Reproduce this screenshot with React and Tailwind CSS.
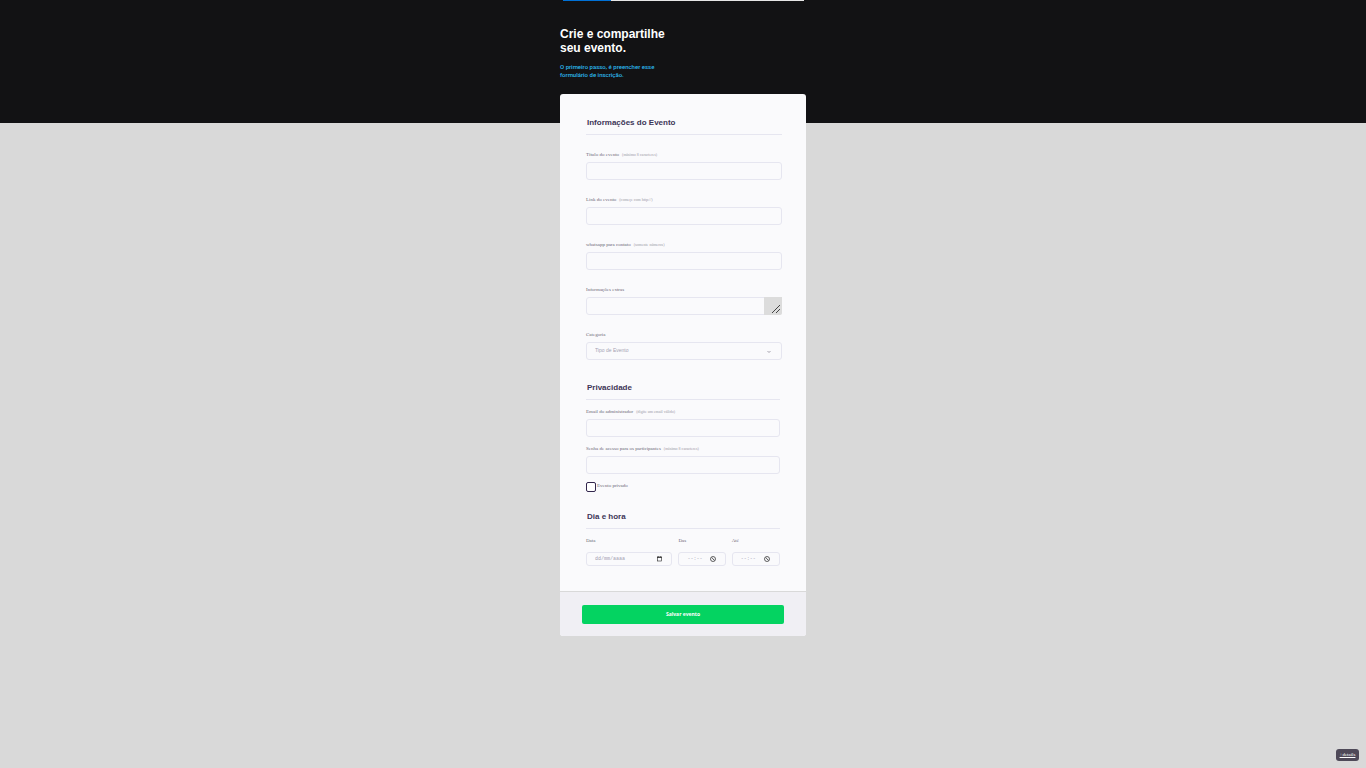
import React from 'react';

const inputClass = 'block w-full h-[18px] rounded-[3px] border border-[#e6e6f0] bg-[#fafafc] px-2 text-[5px] text-[#4e4958] outline-none';
const labelClass = "block font-['Liberation_Serif',serif] text-[5px] leading-[8px] text-[#6c6877]";

function SectionTitle({ children }) {
  return (
    <h2 className="border-b border-[#e6e6f0] pb-[5px] pl-px text-[8px] leading-[12px] font-bold text-[#3d3557]">
      {children}
    </h2>
  );
}

function FieldLabel({ id, text, hint }) {
  return (
    <label htmlFor={id} className={labelClass}>
      {text}
      {hint && <span className="ml-[3px] text-[4px] text-[#9c98a6]">{hint}</span>}
    </label>
  );
}

function Field({ id, text, hint, type = 'text' }) {
  return (
    <div className="flex flex-col gap-[3px]">
      <FieldLabel id={id} text={text} hint={hint} />
      <input id={id} type={type} className={inputClass} />
    </div>
  );
}

function PickerField({ id, text, placeholder, action, children }) {
  return (
    <div className="flex flex-col gap-[7px]">
      <FieldLabel id={id} text={text} />
      <div className="flex h-[14px] items-center rounded-[3px] border border-[#e6e6f0] pl-2 pr-[9px]">
        <input
          id={id}
          type="text"
          placeholder={placeholder}
          className="h-full w-0 min-w-0 flex-1 bg-transparent font-['Liberation_Mono',monospace] text-[5px] outline-none placeholder:text-[#a5a2b3]"
        />
        <button type="button" aria-label={action} className="flex-none">{children}</button>
      </div>
    </div>
  );
}

function CalendarIcon() {
  return (
    <svg width="5" height="6" viewBox="0 0 5 6" fill="none" stroke="#222" aria-hidden="true">
      <rect x="0.4" y="1" width="4.2" height="4" strokeWidth="0.6" />
      <path d="M0.2 1.4h4.6M1.2 0.3v1M3.8 0.3v1" strokeWidth="0.8" />
    </svg>
  );
}

function ClockIcon() {
  return (
    <svg width="6" height="6" viewBox="0 0 6 6" fill="none" stroke="#222" aria-hidden="true">
      <circle cx="3" cy="3" r="2.5" strokeWidth="0.7" />
      <path d="M2 1.6l1 1.5 1.5 1.2" strokeWidth="0.7" />
    </svg>
  );
}

export default function App() {
  return (
    <div className="min-h-screen bg-[#d9d9d9] font-['Liberation_Sans',Arial,sans-serif]">
      <header className="bg-[#121214] pb-[43px]">
        <div className="mx-auto w-full max-w-[246px]">
          <div className="ml-[3px] mr-[2px] flex h-px bg-[#e6e6e6]">
            <div className="w-1/5 bg-[#0070d6]" />
          </div>
          <div className="pt-[26px]">
            <h1 className="text-[12px] leading-[14px] font-bold text-white">
              Crie e compartilhe<br />seu evento.
            </h1>
            <p className="mt-2 pb-[1px] font-['Roboto',sans-serif] text-[6px] leading-[8px] font-medium text-[#2cb9ef]">
              O primeiro passo, é preencher esse<br />formulário de inscrição.
            </p>
          </div>
        </div>
      </header>

      <main className="mx-auto -mt-[29px] w-full max-w-[246px]">
        <form className="overflow-hidden rounded-[3px] bg-[#fafafc]" onSubmit={(e) => e.preventDefault()}>
          <div className="pt-[23px] pb-[25px] pl-[26px]">
            {/* event info */}
            <section className="mr-6">
              <SectionTitle>Informações do Evento</SectionTitle>
              <div className="mt-4 flex flex-col gap-4">
                <Field id="title" text="Título do evento" hint="(mínimo 8 caracteres)" />
                <Field id="link" text="Link do evento" hint="(começe com http://)" />
                <Field id="whatsapp" text="whatsapp para contato" hint="(somente números)" />
                <div className="flex flex-col gap-[3px]">
                  <FieldLabel id="extra" text="Informações extras" />
                  <div className="relative">
                    <textarea id="extra" rows="1" className={inputClass + ' resize-none'} />
                    <svg className="pointer-events-none absolute top-0 right-0" width="18" height="18" viewBox="0 0 18 18" aria-hidden="true">
                      <path d="M0 0h18v16a2 2 0 0 1-2 2H0z" fill="#dcdcdc" />
                      <path d="M8 16l8-8M12 16l4-4" stroke="#333" strokeWidth="0.9" />
                    </svg>
                  </div>
                </div>
                <div className="flex flex-col gap-[3px]">
                  <FieldLabel id="category" text="Categoria" />
                  <div className="relative">
                    <select id="category" defaultValue="" className={inputClass + ' appearance-none text-[#a5a2b3]!'}>
                      <option value="">Tipo de Evento</option>
                    </select>
                    <svg className="pointer-events-none absolute top-2 right-[11px]" width="4" height="4" viewBox="0 0 4 4" fill="none" stroke="#9c98a6" aria-hidden="true">
                      <path d="M0.5 1l1.5 1.5L3.5 1" strokeWidth="0.9" />
                    </svg>
                  </div>
                </div>
              </div>
            </section>

            {/* privacy */}
            <section className="mt-[22px] mr-[26px]">
              <SectionTitle>Privacidade</SectionTitle>
              <div className="mt-2 flex flex-col gap-2">
                <Field id="email" type="email" text="Email do administrador" hint="(digite um email válido)" />
                <Field id="password" type="password" text="Senha de acesso para os participantes" hint="(mínimo 8 caracteres)" />
              </div>
              <div className="mt-2 flex items-start gap-px">
                <input id="private" type="checkbox" className="size-[10px] appearance-none rounded-[2px] border border-[#32264d] bg-white checked:bg-[#32264d]" />
                <FieldLabel id="private" text="Evento privado" />
              </div>
            </section>

            {/* date and time */}
            <section className="mt-[19px] mr-[26px]">
              <SectionTitle>Dia e hora</SectionTitle>
              <div className="mt-2 grid grid-cols-[86fr_47fr_48fr] gap-x-[6px]">
                <PickerField id="date" text="Data" placeholder="dd/mm/aaaa" action="Escolher data">
                  <CalendarIcon />
                </PickerField>
                <PickerField id="from" text="Das" placeholder="--:--" action="Escolher início">
                  <ClockIcon />
                </PickerField>
                <PickerField id="to" text="Até" placeholder="--:--" action="Escolher fim">
                  <ClockIcon />
                </PickerField>
              </div>
            </section>
          </div>

          <footer className="border-t border-[#d9d9d9] bg-[#f0eff4] px-[22px] pt-[13px] pb-3">
            <button type="submit" className="block h-[19px] w-full rounded-[2px] bg-[#04d361] font-['Open_Sans',sans-serif] text-[5px] font-bold text-white">
              Salvar evento
            </button>
          </footer>
        </form>
      </main>

      <a
        href="#details"
        className="fixed right-[7px] bottom-[7px] flex h-3 w-[23px] items-center justify-center rounded-[3px] bg-[#4e4958] font-['Liberation_Serif',serif] text-[5px] leading-[6px] text-white underline"
      >
        +details
      </a>
    </div>
  );
}
